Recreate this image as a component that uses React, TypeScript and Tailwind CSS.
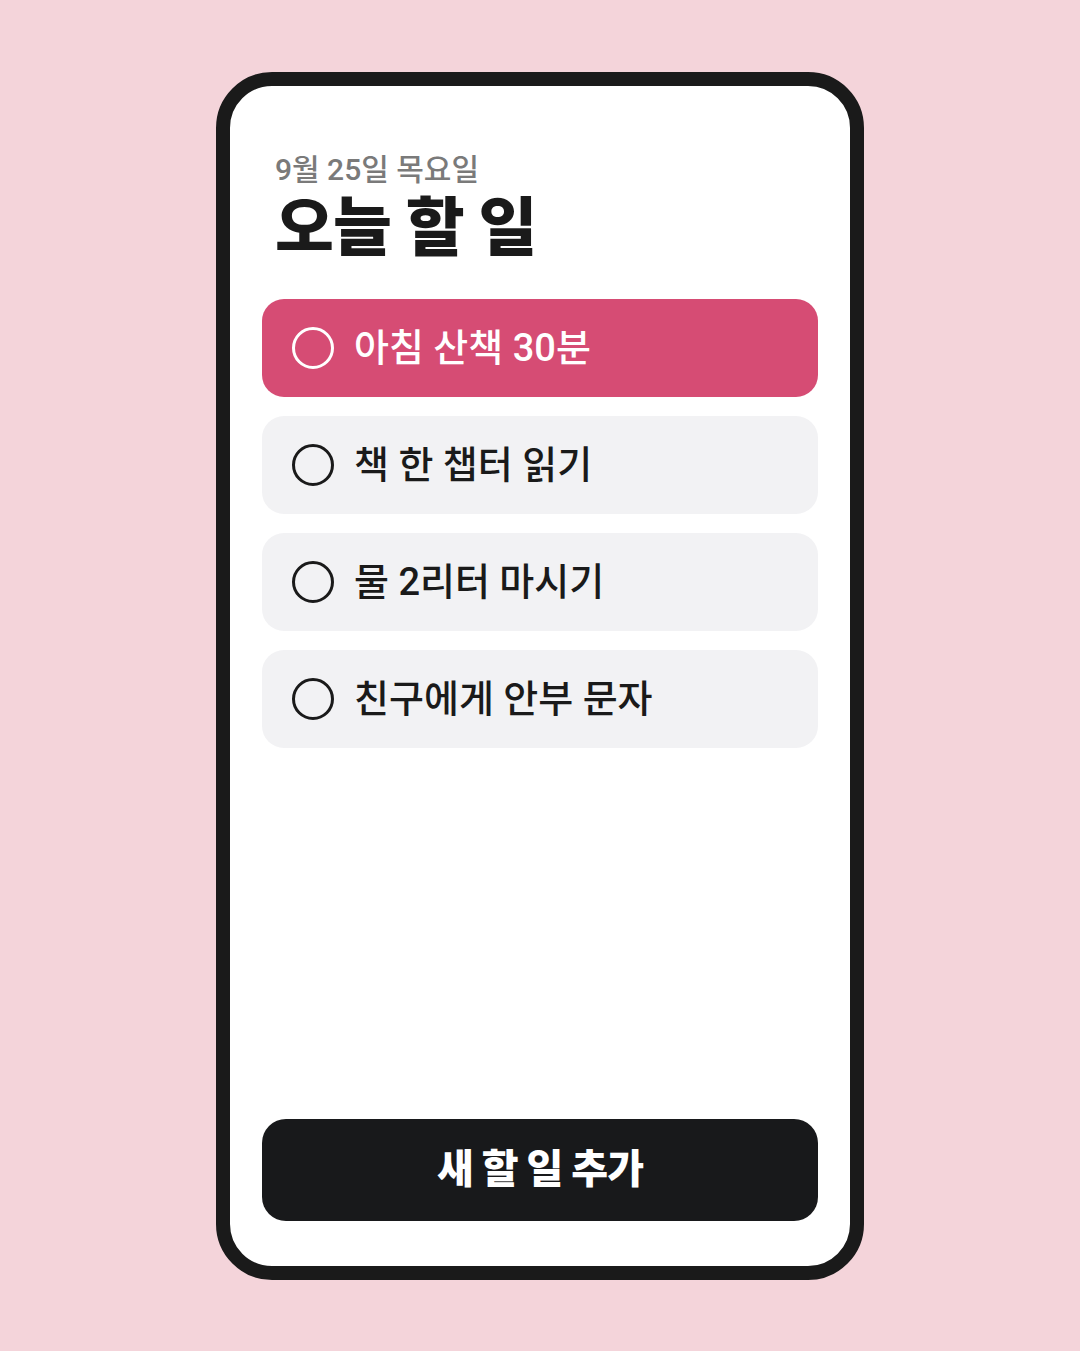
const tasks = [
  { id: 1, label: '아침 산책 30분', active: true },
  { id: 2, label: '책 한 챕터 읽기', active: false },
  { id: 3, label: '물 2리터 마시기', active: false },
  { id: 4, label: '친구에게 안부 문자', active: false },
];

const font = { fontFamily: 'Roboto, "Noto Sans CJK KR", sans-serif' };

function TaskRow({ label, active }: { label: string; active: boolean }) {
  return (
    <div
      className={
        active
          ? 'flex h-[98px] items-center gap-5 rounded-[22px] bg-[#d64c74] pl-[30px] text-white'
          : 'flex h-[98px] items-center gap-5 rounded-[22px] bg-[#f2f2f4] pl-[30px] text-[#1a1a1a]'
      }
    >
      <span
        className={
          active
            ? 'h-[42px] w-[42px] shrink-0 rounded-full border-[3px] border-white'
            : 'h-[42px] w-[42px] shrink-0 rounded-full border-[3px] border-[#1a1a1a]'
        }
      />
      <span className="text-[38px] font-medium leading-none">{label}</span>
    </div>
  );
}

export default function App() {
  return (
    <div className="flex min-h-[1351px] w-full items-center justify-center bg-[#f4d4da]" style={font}>
      <div className="flex h-[1208px] w-[648px] flex-col rounded-[56px] border-[14px] border-[#1a1a1a] bg-white px-8 pb-[45px]">
        <header className="px-[13px] pt-[66px]">
          <p className="text-[30px] font-medium leading-[36px] text-[#7a7a7a]">9월 25일 목요일</p>
          <h1 className="mt-[5px] text-[64px] font-black leading-[72px] tracking-[-1px] text-[#1a1a1a]">
            오늘 할 일
          </h1>
        </header>
        <div className="mt-[34px] flex flex-col gap-[19px]">
          {tasks.map(task => (
            <TaskRow key={task.id} label={task.label} active={task.active} />
          ))}
        </div>
        <div className="flex-1" />
        <button
          type="button"
          className="h-[102px] w-full rounded-[24px] bg-[#18191b] text-[40px] font-black tracking-[-1px] text-white"
        >
          새 할 일 추가
        </button>
      </div>
    </div>
  );
}
